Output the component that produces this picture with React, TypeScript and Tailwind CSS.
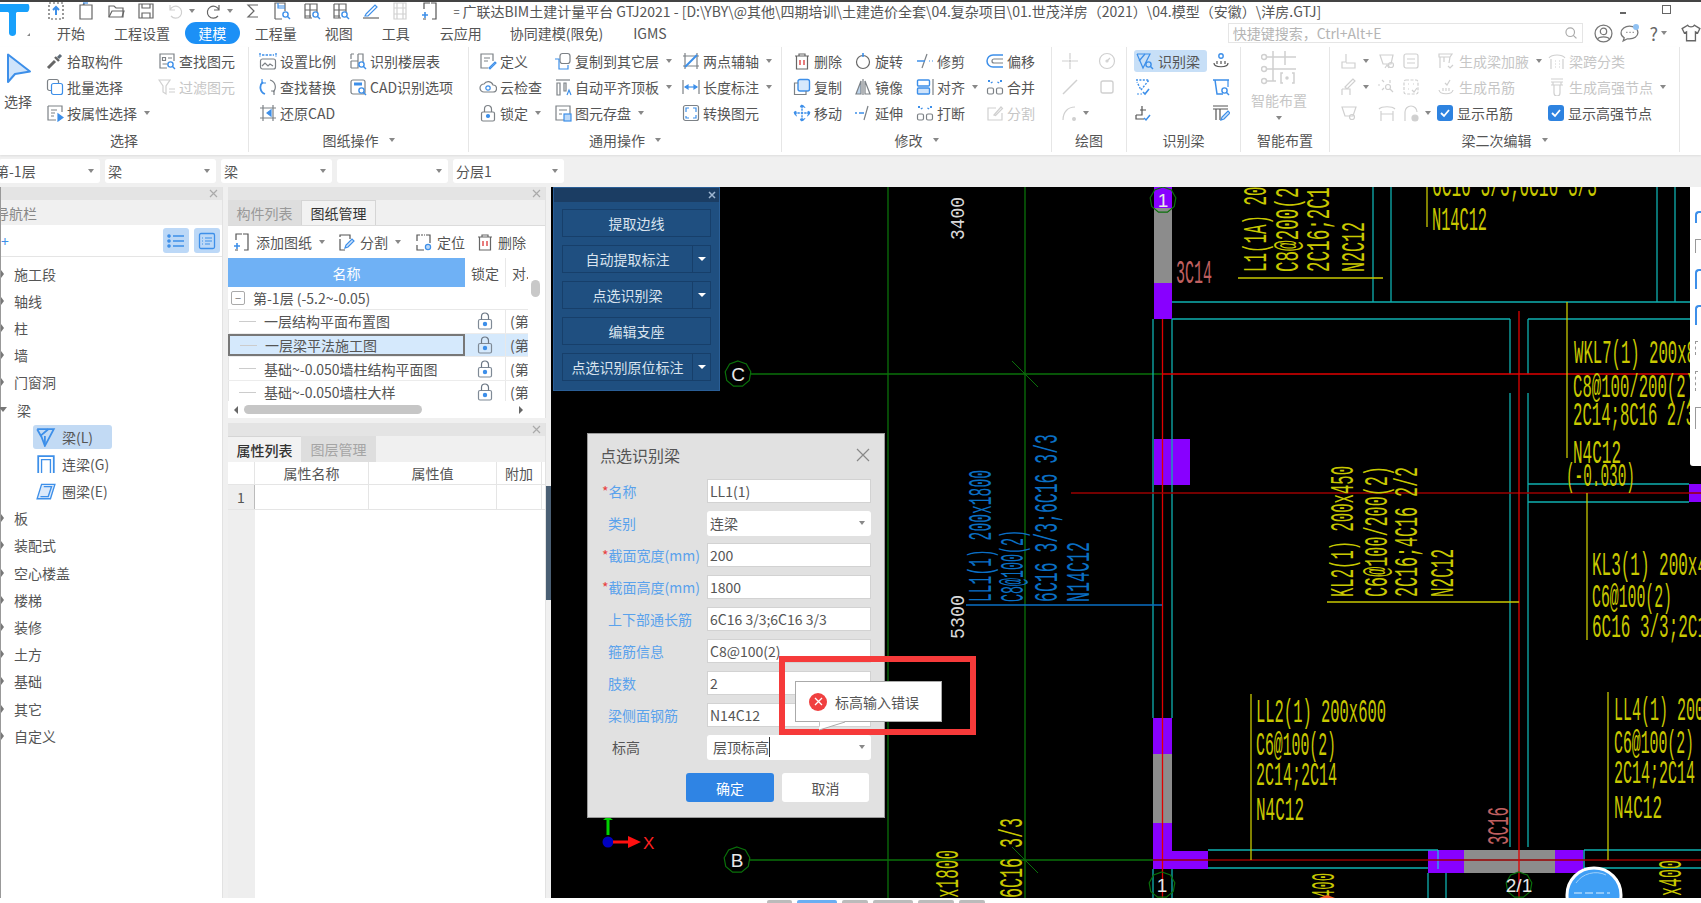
import type { ReactNode } from "react";

const G = "#7c8186";
const B = "#3d8fe9";
const L = "#d0d0d0";

// 18x18 toolbar icon, stroke defaults to gray
function S({ children, c = G, size = 18 }: { children: ReactNode; c?: string; size?: number }) {
  return (
    <svg width={size} height={size} viewBox="0 0 18 18" fill="none" stroke={c} strokeWidth={1.2} className="shrink-0">
      {children}
    </svg>
  );
}

const Mag = () => (
  <g stroke={B} strokeWidth={1.4}>
    <circle cx="12.5" cy="12.5" r="2.6" />
    <path d="M14.5 14.5 17 17" />
  </g>
);

const icons: Record<string, ReactNode> = {
  upload: (
    <S c="#555"><path d="M2 1h14v16H2z" strokeDasharray="2 2" /><path d="M9 13V6M6 8l3-3 3 3" stroke={B} strokeWidth={2} /></S>
  ),
  file: <S c="#666"><path d="M3 3h3l1-2v2h8v14H3z" /><path d="M6 1h5" stroke={B} /></S>,
  folder: <S c="#666"><path d="M2 15V4h5l2 2h7v9z" /><path d="M2 15l3-6h12l-2 6" /></S>,
  save: <S c="#666"><path d="M2 2h14v14H2z" /><path d="M5 2v4h8V2M5 16v-5h8v5" /></S>,
  undo: <S c={L}><path d="M4 3v5h5M4 8a6 6 0 1 1 1 6" /></S>,
  redo: <S c="#666"><path d="M14 3v5H9M14 8a6 6 0 1 0-1 6" /></S>,
  sigma: <S c="#666"><path d="M14 3H4l6 6-6 6h10" /></S>,
  docSearch: <S c="#666"><path d="M2 17V1h10v8M2 17h7" /><path d="M5 1v5h7M5 4h7" stroke={B} /><Mag /></S>,
  gridSearch: <S c="#666"><path d="M2 2h12v8M2 2v14h7M7 2v14M2 8h12M2 14h6" /><Mag /></S>,
  pencilLine: <S c="#666"><path d="M1 16h16" /><path d="M4 12 13 3l2 2-9 9H3z" stroke={B} /></S>,
  film: <S c={L} ><path d="M3 1h12v16H3zM3 6h12M3 12h12M6 1v16M12 1v16" /></S>,
  addDoc: <S c="#555"><path d="M7 1H3v6M11 1h4v16h-4M2 17h3" /><path d="M7 1h4" strokeDasharray="2 1" /><path d="M1 13h6M4 10v6" stroke={B} strokeWidth={1.6} /></S>,
  pick: <S c="#666"><path d="M2 16l7-7" strokeWidth={3} /><path d="M9 5l4 4" strokeWidth={2.4} /><path d="M12 6l3-3" stroke="#5d6a77" strokeWidth={3} /></S>,
  batch: <S c={B}><rect x="1.5" y="1.5" width="11" height="11" rx="2" stroke={G} /><rect x="5.5" y="5.5" width="11" height="11" rx="2" fill="#fff" /></S>,
  attrSel: <S><path d="M2 2h14v6M2 2v14h8" /><path d="M5 6h6M5 9h4M5 12h3" /><path d="M12 10v7l5-3.5z" fill={B} stroke={B} /></S>,
  findEl: <S><path d="M9 16H2V2h14v7" /><path d="M4.5 5.5h3v3h-3zM10 6h4M4.5 12h5" /><Mag /></S>,
  filter: <S c={L}><path d="M1 2h11L8 8v8l-3-2V8z" /><path d="M11 11h6M11 14h6" /></S>,
  scale: <S><path d="M1 1v4M17 1v4M3 3h12" stroke={B} strokeDasharray="2.4 1.2" strokeWidth={1.4} /><rect x="1.5" y="7" width="15" height="10" rx="2" /><path d="m3 14 3-3 3 3 2-2 3 2" /></S>,
  replace: <S c={B}><path d="M4 4a7 7 0 0 0 2 12" strokeWidth={1.8} /><path d="M14 14a7 7 0 0 0-3-12" stroke={G} /><path d="M3 1v4h4" /><path d="M15 17v-4h-3" stroke={G} /></S>,
  restore: <S><path d="M4 1v16M14 1v16M1 4h16M1 14h16" /><path d="M12 6 8 9l4 3z" fill={B} stroke={B} /></S>,
  floorTable: <S><path d="M2 2v5M2 2h3M9 2h5v8M2 9h7M2 16h7V2" /><path d="M2 9v7" /><Mag /></S>,
  cadOpt: <S><rect x="2" y="2" width="14" height="14" rx="2" /><path d="M5 6h8" stroke={B} strokeWidth={3} /><Mag /></S>,
  define: <S><path d="M14 9V2H2v14h7" /><path d="M5 6h6M5 9h4" /><path d="m10 16 6-6 1 1-6 6z" stroke={B} /></S>,
  cloud: <S><path d="M5 14a4 4 0 0 1 0-8 5 5 0 0 1 9 1 3.5 3.5 0 0 1 0 7z" /><circle cx="9" cy="10" r="2.2" stroke={B} /></S>,
  lock: <S><rect x="2.5" y="8" width="13" height="9" rx="1.5" /><path d="M5.5 8V5a3.5 3.5 0 0 1 7 0v3" /><circle cx="9" cy="12" r="1.5" fill={B} stroke={B} /></S>,
  copyTo: <S><rect x="6" y="1.5" width="10" height="10" rx="2.5" /><path d="M1 7h4v10h9v-4" stroke={B} /></S>,
  autoAlign: <S><path d="M2 2h14" /><path d="M3 5h3v12H3zM10 5h2v8h-2z" /><path d="m13 17 2-5 2 5" stroke={B} /></S>,
  saveEl: <S><path d="M2 2h14v14H2z" /><path d="M5 6h8M5 10h3" /><rect x="10" y="10" width="7" height="7" fill="#bcd9f8" stroke={B} /></S>,
  twoPoint: <S><path d="M3 1v16M15 1v16M1 4h16M1 14h16" /><path d="m3 15 12-12" stroke={B} strokeWidth={2} /></S>,
  lengthMark: <S><path d="M1 2v14M17 2v14" /><path d="M3 9h12" stroke={B} /><path d="m3 9 3-2v4zM15 9l-3-2v4z" fill={B} stroke={B} /></S>,
  convert: <S><rect x="1.5" y="1.5" width="15" height="15" rx="2" /><path d="M7 4H4v4M7 14H4v-2M11 4h3v4M11 14h3v-3" stroke={B} /></S>,
  del: <S c="#666"><path d="M2 4h14M6 4V2h6v2M3.5 4v13h11V4" /><path d="M7 8v5M11 8v5" stroke="#e35b5b" strokeWidth={1.6} /></S>,
  rotate: <S c="#666"><circle cx="9" cy="10" r="6.5" /><path d="M9 1v4" stroke={B} strokeWidth={1.6} /></S>,
  trim: <S><path d="M11 2 6 16" /><path d="M1 9h8" stroke={B} strokeWidth={1.5} /><path d="M13 9h1M16 9h1" stroke={B} /></S>,
  offset: <S c={B}><path d="M17 3H7a6 6 0 0 0 0 12h10" strokeWidth={1.5} /><path d="M17 7H8a2 2 0 0 0 0 4h9" stroke={G} /></S>,
  copy: <S c={B}><rect x="5" y="1.5" width="11.5" height="11.5" rx="2" fill="#d7e9fc" strokeWidth={1.4} /><path d="M5 5H1.5v11.5H13V13" stroke={G} /></S>,
  mirror: <S><path d="M7 3 2 16h5z" fill="#bcd4ec" /><path d="M11 3l5 13h-5z" /><path d="M9 1v16" /></S>,
  align: <S c={B}><rect x="1.5" y="2" width="12" height="6" rx="1" strokeWidth={1.4} /><rect x="1.5" y="10" width="12" height="6" rx="1" fill="#cfe3fa" strokeWidth={1.4} /><path d="M17 1v16" stroke={G} /></S>,
  merge: <S><rect x="1.5" y="10" width="6" height="6" rx="1.5" /><rect x="10.5" y="10" width="6" height="6" rx="1.5" /><path d="M2 3h3l1 2M16 3h-3l-1 2" stroke={B} strokeWidth={2} strokeDasharray="2 2" /></S>,
  move: <S c={B}><path d="M9 1v16M1 9h16M9 1 7 3h4zM9 17l-2-2h4zM1 9l2-2v4zM17 9l-2-2v4z" strokeDasharray="2.4 1" strokeWidth={1.4} fill={B} /></S>,
  extend: <S><path d="M14 2 10 16" /><path d="M1 9h2M5 9h5" stroke={B} strokeWidth={1.5} /></S>,
  split: <S c={L}><path d="M10 4H2v12h14V9" /><path d="m8 11 7-8 1.5 1.5-7 7z" /></S>,
  crossD: <S c={L}><path d="M9 1v6M9 11v6M1 9h6M11 9h6" /><circle cx="9" cy="9" r="1" fill={L} /></S>,
  clockD: <S c={L}><circle cx="9" cy="9" r="7.5" /><path d="m9 9 3-3" /><circle cx="9" cy="9" r="1" /></S>,
  lineD: <S c={L}><path d="M2 16 16 2" strokeWidth={1.5} /></S>,
  rectD: <S c={L}><rect x="3" y="3" width="12" height="12" rx="2" strokeWidth={1.4} /></S>,
  arcD: <S c={L}><path d="M2 16c0-8 5-13 12-13" /><circle cx="13" cy="15" r="1.4" fill={L} /></S>,
  idBeam: <S c={B}><path d="M1 2h13L7 16 4 9 1 2" /><path d="m3 9 6-7" /><Mag /></S>,
  idBeamTop: <S c="#555"><circle cx="9" cy="4" r="2.2" stroke={B} strokeWidth={1.4} /><path d="M2 11c0 5 14 5 14 0" /><path d="M5 9v3M9 9v3M13 9v3" /></S>,
  idDash: <S c={B}><path d="M2 2h13L7 12 3 4" strokeDasharray="2 1.4" strokeWidth={1.4} /><path d="m9 14 2 2 4-5" strokeWidth={1.6} /><path d="M3 16h5" strokeDasharray="2 1.4" /></S>,
  idCard: <S c={B}><path d="M1 2h16M3 2l2 14h6" strokeWidth={1.5} /><path d="M16 2v7" /><Mag /></S>,
  idStep: <S c="#555"><path d="M2 11h6V2M2 11v4h8M6 6h6" /><path d="m10 14 2 2 4-5" stroke={B} strokeWidth={1.5} /></S>,
  idPen: <S c="#555"><path d="M1 2h15M1 5h15M4 5v11M4 5h4v11" /><path d="m9 16 1-3 6-6 2 2-6 6z" stroke={B} fill="#cfe3fa" /></S>,
  dStep: <S c={L}><path d="M6 2v8H2v6h13v-5H6" /></S>,
  dFunnel: <S c={L}><path d="M2 3h13l-2 9H5zM7 16l2-3 2 3" /><circle cx="13" cy="13" r="2.5" /></S>,
  dBox: <S c={L}><rect x="2" y="2" width="14" height="14" rx="2" /><path d="M5 7h8M5 11h8" /></S>,
  dLeg: <S c={L}><path d="M2 2h13l-2 3H2zM3 5v11M7 5v5M13 5l-1 6" /><path d="m11 14 2 2 3-3" /></S>,
  dHouse: <S c={L}><path d="M1 6c3-4 13-4 16 0M3 7v10M15 7v10" /><path d="M7 9h1M11 9h1M7 12h1M11 12h1M7 15h1M11 15h1" /></S>,
  dBolt: <S c={L}><path d="M3 1h12M3 4h12M5 4v3M13 4v3M3 7h12M6 7v8a3 3 0 0 0 6 0V7" /></S>,
  dPen: <S c={L}><path d="M13 1 5 9l2 2 8-8zM2 11h8v6M2 11v6" /></S>,
  dSpark: <S c={L}><path d="M6 4 4 2M2 7H0M6 10l-2 2M12 2v3" /><circle cx="10" cy="9" r="2.5" /><path d="m12 11 3 3" /></S>,
  dDice: <S c={L}><rect x="2" y="2" width="14" height="14" rx="2" strokeDasharray="3 1.5" /><path d="M6 6h1M11 6h1M6 11h1" /><path d="m10 12 2 2 3-4" /></S>,
  dStirrup: <S c={L}><path d="M2 12c1 5 13 5 14 0" /><path d="M6 10v3M9 10v3M12 10v3" /><path d="M8 5l2 2 3-5" /></S>,
  dMag: <S c={L}><path d="M2 3h14l-3 9H5z" /><circle cx="12" cy="13" r="2.5" /></S>,
  dTop: <S c={L}><path d="M1 5c3-3 13-3 16 0M3 7v10M15 7v10M3 10h12" /></S>,
  dHook: <S c={L}><path d="M3 17V8a6 6 0 0 1 12 0" /><circle cx="13" cy="14" r="3" fill={L} /></S>,
  listBig: <S c={B}><path d="M6 4h11M6 9h11M6 14h11" strokeWidth={1.5} /><circle cx="2" cy="4" r="1.2" fill={B} /><circle cx="2" cy="9" r="1.2" fill={B} /><circle cx="2" cy="14" r="1.2" fill={B} /></S>,
  listCard: <S c={B}><rect x="1.5" y="1.5" width="15" height="15" rx="1.5" strokeWidth={1.3} /><path d="M4 6h1M7 6h7M4 9h1M7 9h7M4 12h1M7 12h5" /></S>,
  treeBeam: <S c={B} size={20}><path d="M1 2h15L8 17 5 9 1 2" strokeWidth={1.6} /><path d="m4 8 7-6M8 8v8" strokeWidth={1.6} /></S>,
  treeLink: <S c={B} size={20}><path d="M2 17V2h14v15" strokeWidth={1.6} /><path d="M5 17V5h8v12" strokeWidth={1.2} /></S>,
  treeRing: <S c={B} size={20}><path d="M5 3h12l-4 13H1zM7 5h7l-3 9H4" strokeWidth={1.2} fill="#dbe9fa" /></S>,
  locate: <S c="#555"><path d="M6 2H3v6M3 12v5h7M12 2h4v8" /><path d="M7 2h4" strokeDasharray="2 1" /><circle cx="14" cy="14" r="2.6" fill="#bcd9f8" stroke={B} /></S>,
  splitPen: <S c="#555"><path d="M13 6V2H3v15h5" strokeDasharray="16 2" /><path d="m8 15 1-3 6-6 2 2-6 6z" stroke={B} fill="#cfe3fa" /></S>,
  padlock: <S c="#6a7684" size={18}><rect x="2.5" y="7.5" width="13" height="9.5" rx="1.5" stroke="#7f8a96" /><path d="M5.5 7.5V4.5a3.5 3.5 0 0 1 7 0v3" /><circle cx="9" cy="12" r="1.6" fill={B} stroke={B} /></S>,
};

const Caret = ({ className = "" }: { className?: string }) => (
  <span className={`inline-block w-0 h-0 border-x-[3px] border-t-[4px] border-x-transparent border-t-[#888] ${className}`} />
);

function Item({ icon, label, caret, off, gap = "mr-[3px]" }: { icon: string; label?: string; caret?: boolean; off?: boolean; gap?: string }) {
  return (
    <div className="flex items-center h-[26px] whitespace-nowrap">
      <span className={`flex ${gap}`}>{icons[icon]}</span>
      {label && <span className={off ? "text-[#c6c6c6]" : "text-[#555]"}>{label}</span>}
      {caret && <Caret className="ml-[7px]" />}
    </div>
  );
}

function Group({ w, pl, label, caret, children }: { w: string; pl: string; label: string; caret?: boolean; children: ReactNode }) {
  return (
    <div className={`flex flex-col shrink-0 h-[105px] border-r border-[#e6e6e6] ${w}`}>
      <div className={`flex h-[83px] pt-px ${pl}`}>{children}</div>
      <div className="flex items-center justify-center gap-[10px] h-[20px] text-[#555]">
        <span>{label}</span>
        {caret && <Caret />}
      </div>
    </div>
  );
}

function TitleRow() {
  const quick = ["upload", "file", "folder", "save"];
  const rest = ["sigma", "docSearch", "gridSearch", "gridSearch", "pencilLine", "film", "addDoc"];
  return (
    <div className="flex items-center h-[17px] bg-white pl-[41px] text-[#555] whitespace-nowrap">
      {quick.map((q, i) => (
        <span key={i} className="flex justify-center w-[30px]">{icons[q]}</span>
      ))}
      <span className="flex items-center justify-center w-[38px] gap-[5px]">{icons.undo}<Caret /></span>
      <span className="flex items-center justify-center w-[39px] gap-[4px]">{icons.redo}<Caret /></span>
      {rest.map((q, i) => (
        <span key={i} className="flex justify-center w-[29.5px]">{icons[q]}</span>
      ))}
      <span className="ml-[9px] w-[9px] text-[11px]">=</span>
      <span>广联达BIM土建计量平台 GTJ2021 - [D:\YBY\@其他\四期培训\土建造价全套\04.复杂项目\01.世茂洋房（2021）\04.模型（安徽）\洋房.GTJ]</span>
      <span className="ml-auto mr-[30px] flex items-center gap-[36px] text-[#666]">
        <span className="w-[6px] h-[2px] bg-[#666] mt-[4px]" />
        <span className="relative w-[9px] h-[9px] border border-[#666] mb-[2px]" />
      </span>
    </div>
  );
}

function TabRow() {
  return (
    <div className="flex items-center h-[28px] bg-white text-[#555] whitespace-nowrap pl-[57px]">
      <span>开始</span>
      <span className="ml-[29px]">工程设置</span>
      <span className="ml-[15px] flex items-center justify-center w-[56px] h-[22px] rounded-full bg-[#1c90f6] text-white">建模</span>
      <span className="ml-[15px]">工程量</span>
      <span className="ml-[28px]">视图</span>
      <span className="ml-[29px]">工具</span>
      <span className="ml-[30px]">云应用</span>
      <span className="ml-[28px]">协同建模(限免)</span>
      <span className="ml-[30px]">IGMS</span>
      <div className="ml-[561px] flex items-center justify-between w-[364px] h-[20px] bg-white border border-[#e5e5e5] px-[4px] text-[#b5b5b5]">
        <span>快捷键搜索，Ctrl+Alt+E</span>
        <S c="#aaa" size={14}><circle cx="8" cy="8" r="5.5" strokeWidth={1.5} /><path d="m12 12 4 4" strokeWidth={1.5} /></S>
      </div>
      <div className="ml-[11px] flex items-center text-[#666]">
        <S c="#777" size={19}><circle cx="9" cy="9" r="8" /><circle cx="9" cy="7" r="3" /><path d="M3.5 14.5c1-3 10-3 11 0" /></S>
        <span className="ml-[7px] relative">
          <S c="#777" size={19}><path d="M9 2c-4 0-8 2.500-8 6.500 0 2 1 3.500 3 4.500l-1 3 4-2h2c4 0 8-2 8-6 0-3.500-4-6-8-6z" /><path d="M6 8h1M9 8h1M12 8h1" /></S>
          <span className="absolute right-0 top-0 w-[6px] h-[6px] rounded-full bg-[#8fc1f3]" />
        </span>
        <span className="ml-[10px] text-[18px] leading-none">?</span>
        <Caret className="ml-[3px]" />
        <span className="ml-[14px] flex"><S c="#666" size={20}><path d="M6 2 1 5l2 4 2-1v8h8V8l2 1 2-4-5-3c-1 2-5 2-6 0z" /></S></span>
      </div>
    </div>
  );
}

function Ribbon() {
  return (
    <div className="flex items-start h-[108px] bg-white shadow-[0_1px_2px_rgba(0,0,0,0.08)] whitespace-nowrap">
      <Group w="w-[249px]" pl="pl-[5px]" label="选择">
        <div className="flex flex-col w-[41px] pt-[5px]">
          <svg width="26" height="31" viewBox="0 0 26 31" className="ml-px shrink-0">
            <path d="M2 1.500V29l7-8 15-2.500z" fill="#cfe4fb" stroke="#3d8fe9" strokeWidth="2" strokeLinejoin="round" />
          </svg>
          <span className="mt-[7px] text-[#555] -ml-px">选择</span>
        </div>
        <div className="flex flex-col w-[112px]">
          <Item icon="pick" label="拾取构件" />
          <Item icon="batch" label="批量选择" />
          <Item icon="attrSel" label="按属性选择" caret />
        </div>
        <div className="flex flex-col">
          <Item icon="findEl" label="查找图元" />
          <Item icon="filter" label="过滤图元" off />
        </div>
      </Group>
      <Group w="w-[220px]" pl="pl-[10px]" label="图纸操作" caret>
        <div className="flex flex-col w-[90px]">
          <Item icon="scale" label="设置比例" />
          <Item icon="replace" label="查找替换" />
          <Item icon="restore" label="还原CAD" />
        </div>
        <div className="flex flex-col">
          <Item icon="floorTable" label="识别楼层表" />
          <Item icon="cadOpt" label="CAD识别选项" />
        </div>
      </Group>
      <Group w="w-[313px]" pl="pl-[10px]" label="通用操作" caret>
        <div className="flex flex-col w-[75px]">
          <Item icon="define" label="定义" />
          <Item icon="cloud" label="云检查" />
          <Item icon="lock" label="锁定" caret />
        </div>
        <div className="flex flex-col w-[128px]">
          <Item icon="copyTo" label="复制到其它层" caret />
          <Item icon="autoAlign" label="自动平齐顶板" caret />
          <Item icon="saveEl" label="图元存盘" caret />
        </div>
        <div className="flex flex-col">
          <Item icon="twoPoint" label="两点辅轴" caret />
          <Item icon="lengthMark" label="长度标注" caret />
          <Item icon="convert" label="转换图元" />
        </div>
      </Group>
      <Group w="w-[270px]" pl="pl-[11px]" label="修改" caret>
        <div className="flex flex-col w-[61px]">
          <Item icon="del" label="删除" />
          <Item icon="copy" label="复制" />
          <Item icon="move" label="移动" />
        </div>
        <div className="flex flex-col w-[62px]">
          <Item icon="rotate" label="旋转" />
          <Item icon="mirror" label="镜像" />
          <Item icon="extend" label="延伸" />
        </div>
        <div className="flex flex-col w-[70px]">
          <Item icon="trim" label="修剪" />
          <Item icon="align" label="对齐" caret />
          <Item icon="merge" label="打断" />
        </div>
        <div className="flex flex-col">
          <Item icon="offset" label="偏移" />
          <Item icon="merge" label="合并" />
          <Item icon="split" label="分割" off />
        </div>
      </Group>
      <Group w="w-[75px]" pl="pl-[9px]" label="绘图">
        <div className="flex flex-col w-[37px]">
          <Item icon="crossD" />
          <Item icon="lineD" />
          <div className="flex items-center h-[26px]">{icons.arcD}<Caret className="ml-[4px]" /></div>
        </div>
        <div className="flex flex-col">
          <Item icon="clockD" />
          <Item icon="rectD" />
        </div>
      </Group>
      <Group w="w-[114px]" pl="pl-[7px]" label="识别梁">
        <div className="flex flex-col w-[78px]">
          <div className="flex items-center gap-[4px] w-[73px] h-[22px] mt-[2px] mb-[2px] pl-[2px] bg-[#c7dff7] rounded-[3px] text-[#555]">
            {icons.idBeam}
            <span>识别梁</span>
          </div>
          <Item icon="idDash" />
          <Item icon="idStep" />
        </div>
        <div className="flex flex-col">
          <Item icon="idBeamTop" />
          <Item icon="idCard" />
          <Item icon="idPen" />
        </div>
      </Group>
      <Group w="w-[89px]" pl="pl-[10px]" label="智能布置">
        <div className="flex flex-col items-center w-[56px] pt-[3px]">
          <svg width="36" height="36" viewBox="0 0 36 36" fill="none" stroke={L} strokeWidth="1.500" className="shrink-0">
            <path d="M12 0v30M24 0v14M5 6h30M5 18h30M5 30h10" />
            <circle cx="3" cy="6" r="2.500" /><circle cx="3" cy="18" r="2.500" /><circle cx="3" cy="30" r="2.500" />
            <path d="M22 22h-2v10h2M31 22h2v10h-2" />
            <circle cx="26" cy="27" r="1" fill={L} />
          </svg>
          <span className="mt-[3px] leading-[20px] text-[#c6c6c6]">智能布置</span>
          <Caret className="mt-[6px]" />
        </div>
      </Group>
      <Group w="w-[350px]" pl="pl-[10px]" label="梁二次编辑" caret>
        <div className="flex flex-col w-[38px]">
          <div className="flex items-center h-[26px]">{icons.dStep}<Caret className="ml-[5px]" /></div>
          <div className="flex items-center h-[26px]">{icons.dPen}<Caret className="ml-[5px]" /></div>
          <Item icon="dMag" />
        </div>
        <div className="flex flex-col w-[24px]">
          <Item icon="dFunnel" />
          <Item icon="dSpark" />
          <Item icon="dTop" />
        </div>
        <div className="flex flex-col w-[35px]">
          <Item icon="dBox" />
          <Item icon="dDice" />
          <div className="flex items-center h-[26px]">{icons.dHook}<Caret className="ml-[5px]" /></div>
        </div>
        <div className="flex flex-col w-[111px]">
          <Item icon="dLeg" label="生成梁加腋" caret off gap="mr-[4px]" />
          <Item icon="dStirrup" label="生成吊筋" off gap="mr-[4px]" />
          <Check label="显示吊筋" />
        </div>
        <div className="flex flex-col">
          <Item icon="dHouse" label="梁跨分类" off gap="mr-[3px]" />
          <Item icon="dBolt" label="生成高强节点" caret off gap="mr-[3px]" />
          <Check label="显示高强节点" />
        </div>
      </Group>
    </div>
  );
}

function Check({ label }: { label: string }) {
  return (
    <div className="flex items-center h-[26px] gap-[4px]">
      <span className="flex items-center justify-center w-[16px] h-[16px] rounded-[3px] bg-[#2e83e0]">
        <svg width="12" height="12" viewBox="0 0 12 12" fill="none" stroke="#fff" strokeWidth="1.800"><path d="m2 6 3 3 5-6" /></svg>
      </span>
      <span className="text-[#555]">{label}</span>
    </div>
  );
}

function ComboBar() {
  const combos = ["第-1层", "梁", "梁", "", "分层1"];
  return (
    <div className="flex items-center gap-[5px] h-[32px] shrink-0 bg-[#f0f0f0] -ml-px">
      {combos.map((c, i) => (
        <div key={i} className={`flex items-center justify-between h-[24px] bg-white rounded-[3px] pr-[6px] pl-[3px] text-[#555] ${i === 0 ? "w-[101px] overflow-hidden" : "w-[111px]"}`}>
          <span className={i === 0 ? "-ml-[7px]" : ""}>{c}</span>
          <Caret />
        </div>
      ))}
    </div>
  );
}

const PanelHead = () => (
  <div className="flex items-center justify-end h-[13px] bg-[#e4e4e4] pr-[4px] text-[#b5b5b5]">
    <svg width="9" height="9" viewBox="0 0 9 9" stroke="#aaa" strokeWidth="1.200"><path d="m1 1 7 7M8 1 1 8" /></svg>
  </div>
);

const treeTop = ["施工段", "轴线", "柱", "墙", "门窗洞"];
const treeBottom = ["板", "装配式", "空心楼盖", "楼梯", "装修", "土方", "基础", "其它", "自定义"];

function TreeRow({ label, open }: { label: string; open?: boolean }) {
  return (
    <div className="flex items-center h-[27.2px] text-[#555]">
      {open ? (
        <span className="w-0 h-0 -ml-[2px] mr-[10px] border-x-[4px] border-t-[5px] border-x-transparent border-t-[#777]" />
      ) : (
        <span className="w-0 h-0 mr-[10px] border-y-[4px] border-l-[3px] border-y-transparent border-l-[#777]" />
      )}
      <span>{label}</span>
    </div>
  );
}

function NavPanel() {
  return (
    <div className="flex flex-col w-[223px] shrink-0 bg-white border-l border-[#999] border-r-[#e2e2e2] border-r">
      <PanelHead />
      <div className="flex items-center h-[25px] bg-[#f0f0f0] text-[#888] overflow-hidden">
        <span className="-ml-[6px]">导航栏</span>
      </div>
      <div className="flex items-center h-[32px] border-b border-[#e5e5e5] pr-[2px] gap-[5px]">
        <span className="mr-auto text-[#3d8fe9] leading-none">+</span>
        <span className="flex items-center justify-center w-[26px] h-[25px] rounded-[3px] bg-[#bcd8f7]">{icons.listBig}</span>
        <span className="flex items-center justify-center w-[26px] h-[25px] rounded-[3px] bg-[#bcd8f7]">{icons.listCard}</span>
      </div>
      <div className="flex flex-col pt-[3px]">
        {treeTop.map((t) => <TreeRow key={t} label={t} />)}
        <TreeRow label="梁" open />
        <div className="flex flex-col pl-[32px]">
          <div className="flex items-center h-[24px] my-[1.600px] w-[79px] pl-[3px] bg-[#c2daf4] rounded-[3px] gap-[6px] text-[#555]">{icons.treeBeam}<span>梁(L)</span></div>
          <div className="flex items-center h-[27.200px] pl-[3px] gap-[6px] text-[#555]">{icons.treeLink}<span>连梁(G)</span></div>
          <div className="flex items-center h-[27.200px] pl-[3px] gap-[6px] text-[#555]">{icons.treeRing}<span>圈梁(E)</span></div>
        </div>
        {treeBottom.map((t) => <TreeRow key={t} label={t} />)}
      </div>
    </div>
  );
}

const drawings = ["一层结构平面布置图", "一层梁平法施工图", "基础~-0.050墙柱结构平面图", "基础~-0.050墙柱大样"];

function DrawingPanel() {
  return (
    <div className="flex flex-col h-[231px] bg-white border-r border-[#e2e2e2]">
      <PanelHead />
      <div className="flex h-[26px] bg-[#f0f0f0] border-b border-[#dcdcdc]">
        <span className="flex items-center justify-center w-[73px] bg-[#dedede] text-[#999]">构件列表</span>
        <span className="flex items-center justify-center w-[75px] bg-[#f2f2f2] text-[#333] border-x border-t border-[#d5d5d5]">图纸管理</span>
      </div>
      <div className="flex items-center h-[32px] pl-[5px] whitespace-nowrap">
        <Item icon="addDoc" label="添加图纸" gap="mr-[5px]" caret />
        <span className="ml-[12px]"><Item icon="splitPen" label="分割" gap="mr-[5px]" caret /></span>
        <span className="ml-[13px]"><Item icon="locate" label="定位" gap="mr-[5px]" /></span>
        <span className="ml-[11px]"><Item icon="del" label="删除" gap="mr-[4px]" /></span>
      </div>
      <div className="relative flex-1 overflow-hidden">
        <div className="flex h-[29px] w-[300px] text-[#555]">
          <span className="flex items-center justify-center w-[237px] bg-[#6fb1f5] text-white">名称</span>
          <span className="flex items-center justify-center w-[41px] border-r border-[#e8e8e8]">锁定</span>
          <span className="flex items-center pl-[6px] w-[22px] overflow-hidden">对.</span>
        </div>
        <div className="flex items-center h-[23px] w-[300px] border-b border-[#e8e8e8] pl-[3px] text-[#555] whitespace-nowrap">
          <span className="flex items-center justify-center w-[14px] h-[14px] mr-[8px] border border-[#aaa] rounded-[2px] text-[#777] text-[11px] leading-none">−</span>
          第-1层 (-5.2~-0.05)
        </div>
        {drawings.map((d, i) => (
          <div key={d} className={`flex h-[23.700px] w-[300px] text-[#555] border-b border-[#ececec] ${i === 1 ? "bg-[#d5e9fc]" : ""}`}>
            <span className={`flex items-center w-[237px] pl-[2px] whitespace-nowrap ${i === 1 ? "border-2 border-[#777]" : "border-l border-[#e5e5e5]"}`}>
              <span className="w-[17px] h-px bg-[#ccc] mx-[8px]" />{d}
            </span>
            <span className="flex items-center justify-center w-[41px] border-r border-[#e8e8e8]">{icons.padlock}</span>
            <span className="flex items-center pl-[4px] w-[22px] overflow-hidden whitespace-nowrap">(第</span>
          </div>
        ))}
        <div className="absolute right-[5px] top-[22px] w-[9px] h-[17px] rounded-full bg-[#c8c8c8]" />
        <div className="absolute left-0 right-0 bottom-0 flex items-center h-[17px] bg-white">
          <span className="ml-[6px] w-0 h-0 border-y-[4px] border-r-[4px] border-y-transparent border-r-[#666]" />
          <span className="ml-[6px] w-[178px] h-[9px] rounded-full bg-[#c6c6c6]" />
          <span className="ml-[97px] w-0 h-0 border-y-[4px] border-l-[4px] border-y-transparent border-l-[#666]" />
        </div>
      </div>
    </div>
  );
}

function AttrPanel() {
  return (
    <div className="relative flex flex-col flex-1 bg-white border-r border-[#e2e2e2] mt-[5px]">
      <PanelHead />
      <div className="flex h-[26px] bg-[#f0f0f0]">
        <span className="flex items-center justify-center w-[73px] bg-[#f2f2f2] text-[#333] font-medium border-t border-[#d5d5d5]">属性列表</span>
        <span className="flex items-center justify-center w-[75px] bg-[#dedede] text-[#a5a5a5]">图层管理</span>
      </div>
      <div className="flex h-[23px] text-[#555] border-b border-[#e5e5e5] pr-[3px]">
        <span className="w-[27px] border-r border-[#e5e5e5]" />
        <span className="flex items-center justify-center w-[114px] border-r border-[#e5e5e5]">属性名称</span>
        <span className="flex items-center justify-center w-[128px] border-r border-[#e5e5e5]">属性值</span>
        <span className="flex flex-1 items-center justify-center border-r border-[#e5e5e5]">附加</span>
      </div>
      <div className="flex h-[25px] text-[#555] border-b border-[#e5e5e5] pr-[3px]">
        <span className="flex items-center justify-center w-[27px] bg-[#eeeeee] border-r border-[#bbb]">1</span>
        <span className="w-[114px] border-r border-[#e5e5e5]" />
        <span className="w-[128px] border-r border-[#e5e5e5]" />
        <span className="flex-1 border-r border-[#e5e5e5]" />
      </div>
      <div className="flex-1 w-[27px] bg-[#eeeeee]" />
    </div>
  );
}

const Y = "#c8c800";
const LB = "#0a6fc4";
const CY = "#0fb0b0";
const PU = "#8800ff";
const GR = "#0a700a";
const RD = "#e00000";
const DR = "#9a0000";

// CAD annotation, squeezed to the width it has on the drawing
function Cad({ x, y, w, s = 33, c = Y, up, children }: { x: number; y: number; w: number; s?: number; c?: string; up?: boolean; children: string }) {
  return (
    <text
      x={x}
      y={y}
      fontSize={s}
      fill={c}
      textLength={w}
      lengthAdjust="spacingAndGlyphs"
      fontFamily="'Liberation Mono', monospace"
      transform={up ? `rotate(-90 ${x} ${y})` : undefined}
    >
      {children}
    </text>
  );
}

function AxisMark({ cx, cy, label, r = 13 }: { cx: number; cy: number; label: string; r?: number }) {
  const pts = Array.from({ length: 9 }, (_, i) => {
    const a = (i * 2 * Math.PI) / 9 - Math.PI / 2;
    return `${cx + r * Math.cos(a)},${cy + r * Math.sin(a)}`;
  }).join(" ");
  return (
    <g>
      <polygon points={pts} fill="none" stroke={GR} strokeWidth="1.200" />
      <text x={cx} y={cy + 7} fontSize="19" fill="#e8e8e8" textAnchor="middle" fontFamily="'Liberation Sans', sans-serif">{label}</text>
    </g>
  );
}

function CadDrawing() {
  const v = (x: number, y1: number, y2: number, c: string, w = 1.300) => <line x1={x} x2={x} y1={y1} y2={y2} stroke={c} strokeWidth={w} />;
  const h = (y: number, x1: number, x2: number, c: string, w = 1.300) => <line x1={x1} x2={x2} y1={y} y2={y} stroke={c} strokeWidth={w} />;
  const r = (x: number, y: number, w: number, hh: number, c: string) => <rect x={x} y={y} width={w} height={hh} fill={c} />;
  return (
    <svg className="absolute inset-0" width="1151" height="711" viewBox="550 187 1151 711">
      {/* axis lines */}
      {v(887, 187, 898, GR)}
      {v(1024, 187, 898, GR)}
      {h(374, 750, 1161, GR)}
      {h(860, 749, 1152, GR)}
      <line x1="1011" y1="361" x2="1037" y2="387" stroke={GR} />
      <line x1="1011" y1="847" x2="1037" y2="873" stroke={GR} />

      {/* beams and columns */}
      {r(1153, 187, 18, 21, PU)}
      {r(1153, 208, 18, 75, "#8c8c8c")}
      {r(1153, 283, 18, 36, PU)}
      {r(1153, 439, 36, 46, PU)}
      {r(1152, 718, 19, 36, PU)}
      {r(1152, 754, 19, 69, "#8c8c8c")}
      {r(1152, 823, 19, 46, PU)}
      {r(1152, 851, 55, 18, PU)}
      {r(1427, 850, 36, 23, PU)}
      {r(1463, 850, 91, 23, "#8c8c8c")}
      {r(1554, 850, 28, 23, PU)}
      {r(1688, 484, 13, 18, PU)}

      {v(1152, 319, 718, CY)}
      {v(1171, 319, 718, CY)}
      {h(302, 1171, 1690, CY)}
      {h(319, 1171, 1509, CY)}
      {v(1372, 187, 302, CY)}
      {v(1390, 187, 302, CY)}
      {v(1656, 187, 302, CY)}
      {v(1674, 187, 302, CY)}
      {v(1509, 319, 374, CY)}
      {v(1527, 319, 374, CY)}
      {h(319, 1527, 1690, CY)}
      {v(1509, 393, 847, CY)}
      {v(1527, 393, 847, CY)}
      {h(484, 1527, 1688, CY)}
      {h(502, 1527, 1688, CY)}
      {h(850, 1207, 1437, CY)}
      {h(868, 1207, 1427, CY)}
      {v(1437, 850, 869, "#1fb8e8")}
      {h(850, 1583, 1701, CY)}
      {h(868, 1583, 1701, CY)}
      {v(1583, 850, 868, "#1fb8e8")}
      {v(1152, 869, 898, CY)}
      {v(1171, 869, 898, CY)}
      {v(1427, 873, 898, CY)}
      {v(1445, 873, 898, CY)}

      {v(1161.5, 319, 898, RD)}
      {h(374, 1161, 1701, RD)}
      {h(493, 1070, 1701, DR)}
      {h(860, 1152, 1701, DR, 1.600)}
      {v(1518, 311, 898, RD)}
      {h(605, 965, 1161, LB)}

      {/* leader lines */}
      {h(278, 1237, 1382, Y)}
      {v(1426, 187, 227, Y)}
      {v(1566, 302, 458, Y)}
      {h(602, 1326, 1518, Y)}
      {v(1250, 694, 860, Y)}
      {v(1586, 493, 640, Y)}
      {v(1607, 692, 860, Y)}

      {/* dimensions */}
      <Cad up x={963} y={240} w={43} s={21} c="#d8d8d8">3400</Cad>
      <Cad up x={963} y={639} w={44} s={21} c="#d8d8d8">5300</Cad>
      <Cad x={1175} y={283} w={36} c="#c06060">3C14</Cad>
      <Cad up x={1507} y={845} w={38} s={30} c="#c06060">3C16</Cad>

      {/* LL1 blue */}
      <Cad up x={990} y={602} w={132} c={LB}>LL1(1) 200x1800</Cad>
      <Cad up x={1022} y={602} w={72} c={LB}>C8@100(2)</Cad>
      <Cad up x={1056} y={602} w={168} c={LB}>6C16 3/3;6C16 3/3</Cad>
      <Cad up x={1088} y={602} w={60} c={LB}>N14C12</Cad>

      {/* top right annotations */}
      <Cad up x={1265} y={272} w={95}>L1(1A) 200</Cad>
      <Cad up x={1297} y={272} w={95}>C8@200(2)</Cad>
      <Cad up x={1328} y={272} w={95}>2C16;2C14</Cad>
      <Cad up x={1363} y={272} w={50}>N2C12</Cad>
      <Cad x={1431} y={196} w={165}>6C16 3/3;6C16 3/3</Cad>
      <Cad x={1431} y={230} w={55}>N14C12</Cad>
      <Cad x={1573} y={363} w={122}>WKL7(1) 200x8</Cad>
      <Cad x={1572} y={397} w={122}>C8@100/200(2)</Cad>
      <Cad x={1572} y={425} w={122}>2C14;8C16 2/3</Cad>
      <Cad x={1572} y={463} w={48}>N4C12</Cad>
      <Cad x={1565} y={486} w={69}>(-0.030)</Cad>

      {/* middle annotations */}
      <Cad up x={1352} y={597} w={131}>KL2(1) 200x450</Cad>
      <Cad up x={1386} y={597} w={131}>C6@100/200(2)</Cad>
      <Cad up x={1416} y={597} w={130}>2C16;4C16 2/2</Cad>
      <Cad up x={1452} y={597} w={48}>N2C12</Cad>
      <Cad x={1591} y={575} w={115}>KL3(1) 200x4</Cad>
      <Cad x={1591} y={607} w={80}>C6@100(2)</Cad>
      <Cad x={1591} y={637} w={115}>6C16 3/3;2C1</Cad>

      {/* bottom annotations */}
      <Cad x={1255} y={722} w={130}>LL2(1) 200x600</Cad>
      <Cad x={1255} y={755} w={80}>C6@100(2)</Cad>
      <Cad x={1255} y={785} w={81}>2C14;2C14</Cad>
      <Cad x={1255} y={820} w={48}>N4C12</Cad>
      <Cad x={1613} y={720} w={90}>LL4(1) 200</Cad>
      <Cad x={1613} y={753} w={80}>C6@100(2)</Cad>
      <Cad x={1613} y={783} w={81}>2C14;2C14</Cad>
      <Cad x={1613} y={818} w={48}>N4C12</Cad>
      <Cad up x={957} y={898} w={48}>x1800</Cad>
      <Cad up x={1021} y={898} w={80}>6C16 3/3</Cad>
      <Cad up x={1333} y={898} w={25}>400</Cad>
      <Cad up x={1680} y={896} w={36}>x400</Cad>

      <AxisMark cx={737} cy={374} label="C" />
      <AxisMark cx={736} cy={860} label="B" />
      <AxisMark cx={1162} cy={200} label="1" />
      <AxisMark cx={1161} cy={885} label="1" />
      <AxisMark cx={1518} cy={885} label="2/1" />

      {/* coordinate marker */}
      <path d="M607 835v-17" stroke="#00d000" strokeWidth="3" />
      <path d="M602 820h10l-5-4z" fill="#00d000" />
      <circle cx="607" cy="842" r="5.500" fill="#0000c0" />
      <path d="M612 842h17" stroke="#ff1010" strokeWidth="3" />
      <path d="M627 836l13 6-13 6z" fill="#ff1010" />
      <text x="642" y="849" fontSize="17" fill="#ff2020" fontFamily="'Liberation Sans', sans-serif">X</text>

      {/* floating compass button */}
      <circle cx="1593" cy="895" r="27" fill="#3f9ff5" stroke="#fff" strokeWidth="3" />
      <path d="M1575 883a24 24 0 0 1 30-8" stroke="#9fd0fa" fill="none" />
      <path d="M1573 893h36" stroke="#dff0ff" strokeDasharray="8 3" />
      <path d="M1318 898l8-3 8 3z" fill="#f05a28" />
    </svg>
  );
}

function FloatButton({ label, drop }: { label: string; drop?: boolean }) {
  return (
    <div className="flex h-[28px] bg-[#1f4f80] border border-[#173f6a] text-[#d9e3ee]">
      <span className="flex flex-1 items-center justify-center">{label}</span>
      {drop && (
        <span className="flex items-center justify-center w-[18px] border-l border-[#173f6a]">
          <span className="w-0 h-0 border-x-[4px] border-t-[4px] border-x-transparent border-t-white" />
        </span>
      )}
    </div>
  );
}

function FloatPanel() {
  return (
    <div className="absolute left-[2px] top-0 flex flex-col w-[167px] h-[204px] bg-[#1f4f80] border border-[#2a5e96]">
      <div className="flex items-center justify-end h-[14px] bg-[#1b3d63] pr-[3px]">
        <svg width="8" height="8" viewBox="0 0 8 8" stroke="#9fb7d2" strokeWidth="1.500"><path d="m1 1 6 6M7 1 1 7" /></svg>
      </div>
      <div className="flex flex-col gap-[8px] px-[8px] pt-[7px]">
        <FloatButton label="提取边线" />
        <FloatButton label="自动提取标注" drop />
        <FloatButton label="点选识别梁" drop />
        <FloatButton label="编辑支座" />
        <FloatButton label="点选识别原位标注" drop />
      </div>
    </div>
  );
}

function Field({ label, star, value, select, dark, cursor }: { label: string; star?: boolean; value: string; select?: boolean; dark?: boolean; cursor?: boolean }) {
  return (
    <div className="flex items-center h-[24px]">
      <span className={`flex w-[119px] whitespace-nowrap ${star ? "pl-[14px]" : dark ? "pl-[24px]" : "pl-[20px]"} ${dark ? "text-[#555]" : "text-[#5aa2ec]"}`}>
        {star && <span className="text-[#e84040]">*</span>}
        {label}
      </span>
      {select ? (
        <div className="flex items-center justify-between w-[164px] h-[25px] bg-white rounded-[3px] pl-[3px] pr-[6px] text-[#555]">
          <span className={cursor ? "border-r border-[#333] pl-[3px]" : ""}>{value}</span>
          <Caret />
        </div>
      ) : (
        <div className="flex items-center w-[164px] h-[24px] bg-white border border-[#d2d2d2] pl-[2px] text-[#555]">{value}</div>
      )}
    </div>
  );
}

function BeamDialog() {
  return (
    <div className="absolute left-[36px] top-[246px] flex flex-col w-[298px] h-[385px] bg-[#e1e1e1] border border-[#9a9a9a]">
      <div className="flex items-center justify-between h-[45px] pl-[12px] pr-[14px] pb-[3px] text-[16px] text-[#555]">
        <span>点选识别梁</span>
        <svg width="14" height="14" viewBox="0 0 14 14" stroke="#888" strokeWidth="1.200"><path d="m1 1 12 12M13 1 1 13" /></svg>
      </div>
      <div className="flex flex-col gap-[8px]">
        <Field star label="名称" value="LL1(1)" />
        <Field label="类别" value="连梁" select />
        <Field star label="截面宽度(mm)" value="200" />
        <Field star label="截面高度(mm)" value="1800" />
        <Field label="上下部通长筋" value="6C16 3/3;6C16 3/3" />
        <Field label="箍筋信息" value="C8@100(2)" />
        <Field label="肢数" value="2" />
        <Field label="梁侧面钢筋" value="N14C12" />
        <Field dark label="标高" value="层顶标高" select cursor />
      </div>
      <div className="flex justify-end gap-[8px] pr-[15px] mt-[14px]">
        <span className="flex items-center justify-center w-[88px] h-[29px] rounded-[3px] bg-[#2f84e4] text-white">确定</span>
        <span className="flex items-center justify-center w-[87px] h-[29px] rounded-[3px] bg-white text-[#555]">取消</span>
      </div>
    </div>
  );
}

function ErrorTip() {
  return (
    <>
      <div className="absolute left-[228px] top-[469px] w-[197px] h-[79px] border-[6px] border-[#f63a3a]" />
      <div className="absolute left-[244px] top-[494px] flex items-center gap-[8px] w-[147px] h-[41px] bg-white border border-[#aaa] pl-[13px] text-[#555]">
        <span className="flex items-center justify-center w-[18px] h-[18px] rounded-full bg-[#f04040]">
          <svg width="9" height="9" viewBox="0 0 9 9" stroke="#fff" strokeWidth="1.300"><path d="m1 1 7 7M8 1 1 8" /></svg>
        </span>
        <span>标高输入错误</span>
      </div>
      <svg className="absolute left-[268px] top-[534px]" width="30" height="11" viewBox="0 0 30 11">
        <path d="M0 0v1c1 3 0 6-3 9L26 1V0z" fill="#fff" stroke="#aaa" />
      </svg>
    </>
  );
}

function RightDock() {
  return (
    <div className="absolute right-0 top-0 flex flex-col items-start w-[11px] h-[279px] bg-white rounded-bl-[3px] pt-[24px] pl-[5px] gap-[16px] overflow-hidden">
      <span className="w-[9px] h-[12px] border-l-2 border-t-2 border-[#3d8fe9] rounded-tl-[4px]" />
      <span className="w-[9px] h-[14px] border-l border-t border-[#999]" />
      <span className="w-[9px] h-[20px] border-l-2 border-t-2 border-[#3d8fe9] rounded-tl-[4px]" />
      <span className="w-[9px] h-[20px] border-l-2 border-t-2 border-[#3d8fe9] rounded-tl-[4px]" />
      <span className="w-[9px] h-[14px] border-l border-t border-[#999] border-dashed" />
      <span className="w-[9px] h-[20px] border-l border-t border-[#999] border-dashed" />
      <span className="w-[9px] h-[22px] border-l border-t border-[#999]" />
    </div>
  );
}

export default function App() {
  return (
    <div className="flex flex-col w-[1701px] h-[903px] overflow-hidden bg-[#f0f0f0] text-[14px] leading-[20px] font-['Noto_Sans_CJK_SC','Liberation_Sans',sans-serif]">
      <div className="relative z-10 h-[2px] shrink-0 bg-[#444]" />
      <div className="relative shrink-0">
        <TitleRow />
        <TabRow />
        <svg className="absolute left-0 top-px" width="36" height="36" viewBox="0 0 36 36">
          <path d="M0 1h28c2 0 2 8-1 8H17l-1 1v20c0 4-7 4-7 0V10l-1-1H0z" fill="#18a0fb" />
          <path d="M30 33v-3l-3 3z" fill="#888" />
        </svg>
        <Ribbon />
      </div>
      <ComboBar />
      <div className="flex flex-1 min-h-0">
        <NavPanel />
        <div className="flex flex-col w-[318px] ml-[5px]">
          <DrawingPanel />
          <AttrPanel />
        </div>
        <div className="flex w-[5px] flex-col">
          <div className="h-[299px]" />
          <div className="h-[114px] bg-[#4a5f74]" />
        </div>
        <div className="relative flex-1 bg-black overflow-hidden">
          <CadDrawing />
          <FloatPanel />
          <BeamDialog />
          <RightDock />
          <ErrorTip />
        </div>
      </div>
      <div className="flex items-end h-[5px] shrink-0 bg-white pl-[767px] gap-[5px]">
        <span className="w-[25px] h-[3px] bg-[#bbb] rounded-t-[2px]" />
        <span className="w-[40px] h-[3px] bg-[#6aaef2] rounded-t-[2px]" />
        <span className="w-[26px] h-[3px] bg-[#bbb] rounded-t-[2px]" />
        <span className="w-[40px] h-[3px] bg-[#bbb] rounded-t-[2px]" />
        <span className="w-[36px] h-[3px] bg-[#bbb] rounded-t-[2px]" />
        <span className="w-[26px] h-[3px] bg-[#bbb] rounded-t-[2px]" />
      </div>
    </div>
  );
}
